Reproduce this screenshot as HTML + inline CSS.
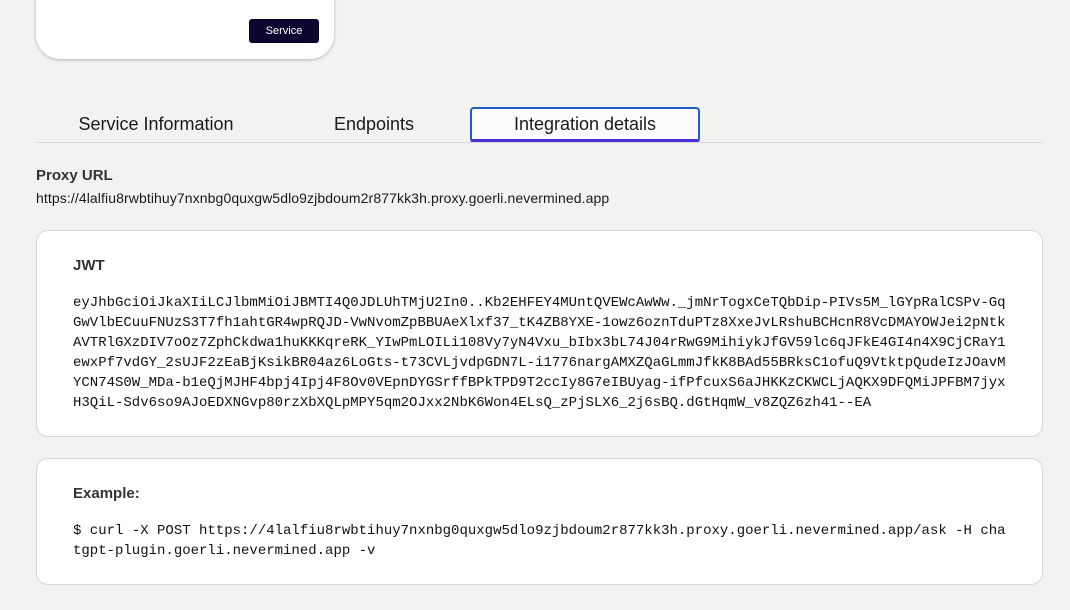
<!DOCTYPE html>
<html><head><style>
body{margin:0;width:1070px;height:610px;overflow:hidden;background:#f2f2f1;font-family:"Liberation Sans",sans-serif;color:#1a1a1a;position:relative}
.top{position:absolute;left:36px;top:-20px;width:298px;height:79px;background:#fff;border-radius:0 0 24px 24px;box-shadow:0 1px 3px rgba(0,0,0,.25)}
.btn{position:absolute;left:249px;top:19px;width:70px;height:24px;background:#0b0530;color:#fff;border-radius:3px;font-size:11px;text-align:center;line-height:24px}
.tab{position:absolute;top:107px;height:34px;line-height:34px;font-size:18px;text-align:center}
.line{position:absolute;left:36px;top:142px;width:1007px;height:1px;background:#d8d8d8}
.card{position:absolute;left:36px;width:1005px;background:#fff;border:1px solid #d6d6d6;border-radius:12px}
.mono{font-family:"Liberation Mono",monospace;font-size:14px;line-height:20px;white-space:pre;position:absolute;left:36px;color:#111}
h4{margin:0;position:absolute;left:36px;font-size:15px;font-weight:bold;color:#333}
</style></head><body>
<div class="top"></div>
<div class="btn">Service</div>
<div class="tab" style="left:60px;width:192px">Service Information</div>
<div class="tab" style="left:320px;width:108px">Endpoints</div>
<div class="tab" style="left:470px;width:226px;border:2px solid #1a5fc8;border-bottom:4px solid #4a30d8;border-radius:4px;height:30px;line-height:30px;background:#fbfbfb">Integration details</div>
<div class="line"></div>
<div style="position:absolute;left:36px;top:167px;font-size:15px;font-weight:bold;color:#333">Proxy URL</div>
<div style="position:absolute;left:36px;top:190px;font-size:14px;letter-spacing:0.1px">https://4lalfiu8rwbtihuy7nxnbg0quxgw5dlo9zjbdoum2r877kk3h.proxy.goerli.nevermined.app</div>
<div class="card" style="top:230px;height:205px">
<h4 style="top:26px">JWT</h4>
<div class="mono" style="top:62px">eyJhbGciOiJkaXIiLCJlbmMiOiJBMTI4Q0JDLUhTMjU2In0..Kb2EHFEY4MUntQVEWcAwWw._jmNrTogxCeTQbDip-PIVs5M_lGYpRalCSPv-Gq
GwVlbECuuFNUzS3T7fh1ahtGR4wpRQJD-VwNvomZpBBUAeXlxf37_tK4ZB8YXE-1owz6oznTduPTz8XxeJvLRshuBCHcnR8VcDMAYOWJei2pNtk
AVTRlGXzDIV7oOz7ZphCkdwa1huKKKqreRK_YIwPmLOILi108Vy7yN4Vxu_bIbx3bL74J04rRwG9MihiykJfGV59lc6qJFkE4GI4n4X9CjCRaY1
ewxPf7vdGY_2sUJF2zEaBjKsikBR04az6LoGts-t73CVLjvdpGDN7L-i1776nargAMXZQaGLmmJfkK8BAd55BRksC1ofuQ9VtktpQudeIzJOavM
YCN74S0W_MDa-b1eQjMJHF4bpj4Ipj4F8Ov0VEpnDYGSrffBPkTPD9T2ccIy8G7eIBUyag-ifPfcuxS6aJHKKzCKWCLjAQKX9DFQMiJPFBM7jyx
H3QiL-Sdv6so9AJoEDXNGvp80rzXbXQLpMPY5qm2OJxx2NbK6Won4ELsQ_zPjSLX6_2j6sBQ.dGtHqmW_v8ZQZ6zh41--EA</div>
</div>
<div class="card" style="top:458px;height:125px">
<h4 style="top:26px">Example:</h4>
<div class="mono" style="top:62px">$ curl -X POST https://4lalfiu8rwbtihuy7nxnbg0quxgw5dlo9zjbdoum2r877kk3h.proxy.goerli.nevermined.app/ask -H cha
tgpt-plugin.goerli.nevermined.app -v</div>
</div>
</body></html>
